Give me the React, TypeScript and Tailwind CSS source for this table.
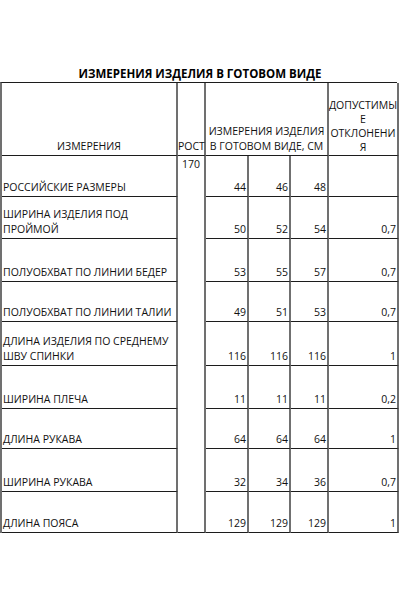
const font = { fontFamily: '"Open Sans", "Noto Sans", Arial, sans-serif' };

type Row = { name: string[]; h: string; vals: string[]; dev: string; rost?: string };

const rows: Row[] = [
  { name: ['РОССИЙСКИЕ РАЗМЕРЫ'], h: 'h-[41px]', vals: ['44', '46', '48'], dev: '', rost: '170' },
  { name: ['ШИРИНА ИЗДЕЛИЯ ПОД', 'ПРОЙМОЙ'], h: 'h-[42px]', vals: ['50', '52', '54'], dev: '0,7' },
  { name: ['ПОЛУОБХВАТ ПО ЛИНИИ БЕДЕР'], h: 'h-[43px]', vals: ['53', '55', '57'], dev: '0,7' },
  { name: ['ПОЛУОБХВАТ ПО ЛИНИИ ТАЛИИ'], h: 'h-[40px]', vals: ['49', '51', '53'], dev: '0,7' },
  { name: ['ДЛИНА ИЗДЕЛИЯ ПО СРЕДНЕМУ', 'ШВУ СПИНКИ'], h: 'h-[44px]', vals: ['116', '116', '116'], dev: '1' },
  { name: ['ШИРИНА ПЛЕЧА'], h: 'h-[43px]', vals: ['11', '11', '11'], dev: '0,2' },
  { name: ['ДЛИНА РУКАВА'], h: 'h-[40px]', vals: ['64', '64', '64'], dev: '1' },
  { name: ['ШИРИНА РУКАВА'], h: 'h-[43px]', vals: ['32', '34', '36'], dev: '0,7' },
  { name: ['ДЛИНА ПОЯСА'], h: 'h-[41px]', vals: ['129', '129', '129'], dev: '1' },
];

const cols = 'grid grid-cols-[176px_28px_43px_42px_38px_70px]';
// vertical rules are greyer and a bit wider than the horizontal ones
const cell = 'border-r-2 border-r-[#707070] border-b border-b-[#1c1c1c]';

export default function App() {
  return (
    <div className="w-[400px] h-[600px] bg-white text-[#111] pt-[66px]" style={font}>
      <div className="h-4 leading-4 text-center text-[11.5px] font-bold text-black">
        ИЗМЕРЕНИЯ ИЗДЕЛИЯ В ГОТОВОМ ВИДЕ
      </div>
      <div className="w-[397px] border-t border-t-[#1c1c1c] border-l-2 border-l-[#707070] leading-[15px] text-[10.5px]">
        {/* header */}
        <div className={`${cols} h-[73px]`}>
          <div className={`${cell} flex items-end justify-center pb-[1px]`}>ИЗМЕРЕНИЯ</div>
          <div className={`${cell} flex items-end pb-[1px]`}>РОСТ</div>
          <div className={`${cell} col-span-3 flex flex-col items-center justify-end pb-[1px] text-center`}>
            <span>ИЗМЕРЕНИЯ ИЗДЕЛИЯ</span>
            <span>В ГОТОВОМ ВИДЕ, СМ</span>
          </div>
          <div className={`${cell} flex flex-col items-center justify-end pb-[1px] leading-[14px]`}>
            <span>ДОПУСТИМЫ</span>
            <span>Е</span>
            <span>ОТКЛОНЕНИ</span>
            <span>Я</span>
          </div>
        </div>
        {rows.map((r, i) => {
          const last = i === rows.length - 1;
          return (
            <div key={i} className={`${cols} ${r.h}`}>
              <div className={`${cell} flex flex-col justify-end pl-[1px] pb-[1px] whitespace-nowrap`}>
                {r.name.map((n) => (
                  <span key={n}>{n}</span>
                ))}
              </div>
              <div
                className={`border-r-2 border-r-[#707070] text-center pt-[1px] ${
                  last ? 'border-b border-b-[#1c1c1c]' : ''
                }`}
              >
                {r.rost}
              </div>
              {r.vals.map((v, j) => (
                <div key={j} className={`${cell} flex items-end justify-end pr-[1px] pb-[1px]`}>
                  {v}
                </div>
              ))}
              <div className={`${cell} flex items-end justify-end pr-[1px] pb-[1px]`}>{r.dev}</div>
            </div>
          );
        })}
      </div>
    </div>
  );
}
